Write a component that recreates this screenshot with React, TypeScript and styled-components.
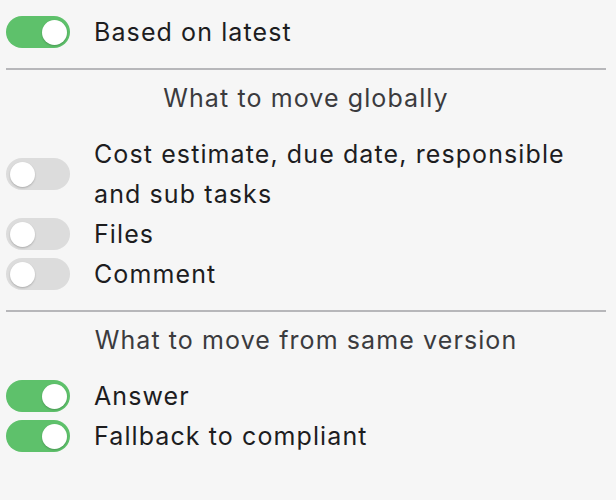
import React from "react";
import styled, { createGlobalStyle } from "styled-components";

const Global = createGlobalStyle`
  html, body { margin: 0; padding: 0; background: #f6f6f6; }
  body { font-family: Inter, "Noto Sans", sans-serif; }
`;

const Page = styled.div`
  padding: 12px 10px 20px 6px;
  display: flex;
  flex-direction: column;
`;

const Row = styled.div`
  display: flex;
  align-items: center;
  gap: 24px;
`;

const Track = styled.div<{ $on: boolean }>`
  flex: 0 0 auto;
  width: 64px;
  height: 32px;
  border-radius: 16px;
  background: ${(p) => (p.$on ? "#5ec16b" : "#dcdcdc")};
  position: relative;
`;

const Knob = styled.div<{ $on: boolean }>`
  position: absolute;
  top: 3.5px;
  left: ${(p) => (p.$on ? "35.5px" : "3.5px")};
  width: 25px;
  height: 25px;
  border-radius: 50%;
  background: #fff;
  box-shadow: 0 1px 2px rgba(0, 0, 0, 0.22);
`;

const Label = styled.div`
  font-size: 25px;
  letter-spacing: 1.1px;
  line-height: 40px;
  color: #1d1d1f;
  max-width: 490px;
`;

const Divider = styled.div`
  height: 2px;
  background: #b7b7ba;
  margin-top: 16px;
`;

const Heading = styled.div`
  margin-top: 8px;
  margin-bottom: 16px;
  text-align: center;
  font-size: 25px;
  letter-spacing: 1.1px;
  line-height: 40px;
  color: #3b3b3e;
`;

const Toggle = ({ on }: { on: boolean }) => (
  <Track $on={on}>
    <Knob $on={on} />
  </Track>
);

const Item = ({ on, children }: { on: boolean; children: React.ReactNode }) => (
  <Row>
    <Toggle on={on} />
    <Label>{children}</Label>
  </Row>
);

export default function App() {
  return (
    <>
      <Global />
      <Page>
        <Item on>Based on latest</Item>
        <Divider />
        <Heading>What to move globally</Heading>
        <Item on={false}>Cost estimate, due date, responsible and sub tasks</Item>
        <Item on={false}>Files</Item>
        <Item on={false}>Comment</Item>
        <Divider />
        <Heading>What to move from same version</Heading>
        <Item on>Answer</Item>
        <Item on>Fallback to compliant</Item>
      </Page>
    </>
  );
}
